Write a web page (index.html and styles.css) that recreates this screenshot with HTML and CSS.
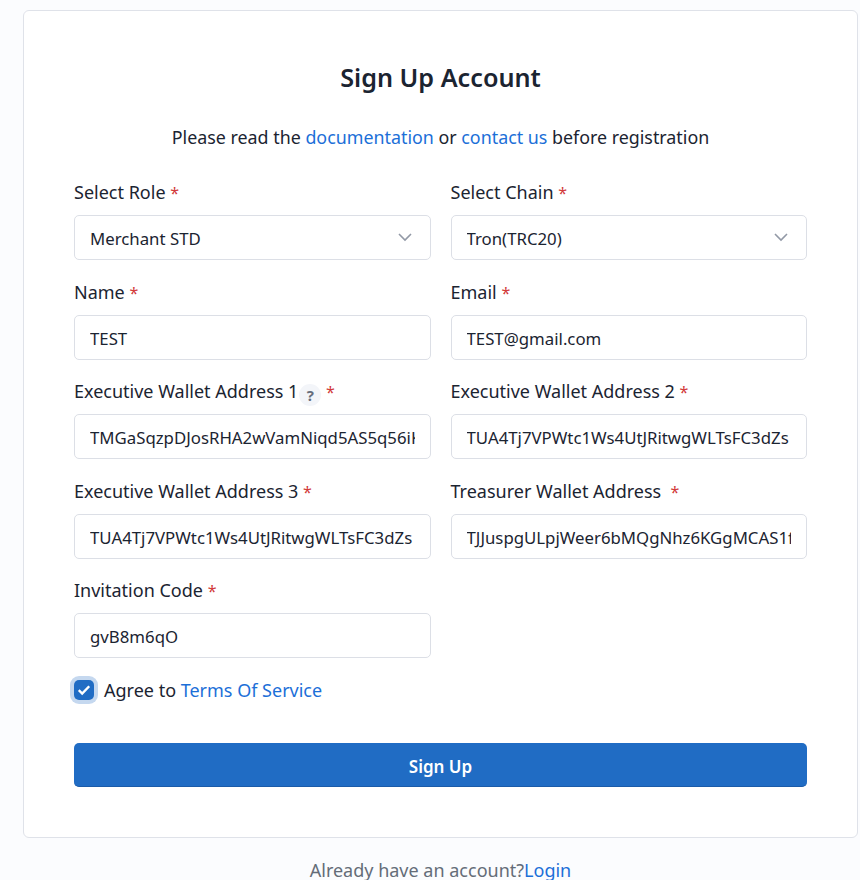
FILE: index.html
```html
<!DOCTYPE html>
<html lang="en">
<head>
    <meta charset="UTF-8">
    <meta name="viewport" content="width=device-width, initial-scale=1.0">
    <title>Sign Up Account</title>
    <link rel="stylesheet" href="styles.css">
</head>
<body>
    <div class="card">
        <h1 class="title">Sign Up Account</h1>
        <p class="intro">Please read the <a href="#">documentation</a> or <a href="#">contact us</a> before registration</p>
        <form class="form">
            <div class="grid">
                <div class="field">
                    <label>Select Role <span class="req">*</span></label>
                    <div class="select">
                        <input class="control" type="text" value="Merchant STD" readonly>
                        <svg class="chevron" width="16" height="16" viewBox="0 0 16 16"><path d="M2 5l6 6 6-6" fill="none" stroke="#9299a6" stroke-width="1.6"/></svg>
                    </div>
                </div>
                <div class="field">
                    <label>Select Chain <span class="req">*</span></label>
                    <div class="select">
                        <input class="control" type="text" value="Tron(TRC20)" readonly>
                        <svg class="chevron" width="16" height="16" viewBox="0 0 16 16"><path d="M2 5l6 6 6-6" fill="none" stroke="#9299a6" stroke-width="1.6"/></svg>
                    </div>
                </div>
                <div class="field">
                    <label>Name <span class="req">*</span></label>
                    <input class="control" type="text" value="TEST">
                </div>
                <div class="field">
                    <label>Email <span class="req">*</span></label>
                    <input class="control" type="text" value="TEST@gmail.com">
                </div>
                <div class="field">
                    <label>Executive Wallet Address 1<span class="help">?</span> <span class="req">*</span></label>
                    <input class="control" type="text" value="TMGaSqzpDJosRHA2wVamNiqd5AS5q56iKfLZ">
                </div>
                <div class="field">
                    <label>Executive Wallet Address 2 <span class="req">*</span></label>
                    <input class="control" type="text" value="TUA4Tj7VPWtc1Ws4UtJRitwgWLTsFC3dZs">
                </div>
                <div class="field">
                    <label>Executive Wallet Address 3 <span class="req">*</span></label>
                    <input class="control" type="text" value="TUA4Tj7VPWtc1Ws4UtJRitwgWLTsFC3dZs">
                </div>
                <div class="field">
                    <label>Treasurer Wallet Address &nbsp;<span class="req">*</span></label>
                    <input class="control" type="text" value="TJJuspgULpjWeer6bMQgNhz6KGgMCAS1fPqR">
                </div>
                <div class="field">
                    <label>Invitation Code <span class="req">*</span></label>
                    <input class="control" type="text" value="gvB8m6qO">
                </div>
            </div>
            <div class="agree">
                <span class="check">
                    <svg width="14" height="12" viewBox="0 0 14 12"><path d="M1.8 6.2l3.4 3.4 7-7.4" fill="none" stroke="#fff" stroke-width="2.4"/></svg>
                </span>
                <span>Agree to <a href="#">Terms Of Service</a></span>
            </div>
            <button class="submit" type="button">Sign Up</button>
        </form>
    </div>
    <p class="footer">Already have an account?<a href="#">Login</a></p>
</body>
</html>
```

FILE: styles.css
```css
* {
    box-sizing: border-box;
}
body {
    margin: 0;
    height: 880px;
    overflow: hidden;
    padding: 10px 2px 0 23px;
    background: #fbfcfe;
    color: #1b2431;
    font-family: "Noto Sans", sans-serif;
    font-size: 18px;
}
a {
    color: #1c6fd8;
    text-decoration: none;
}
.card {
    height: 828px;
    padding: 0 50px;
    background: #fff;
    border: 1px solid #dfe2e9;
    border-radius: 6px;
}
.title {
    margin: 46px 0 0;
    height: 40px;
    line-height: 40px;
    text-align: center;
    font-size: 25.2px;
    font-weight: 600;
}
.intro {
    margin: 25px 0 0;
    height: 30px;
    line-height: 30px;
    text-align: center;
    font-size: 17.85px;
}
.grid {
    display: grid;
    grid-template-columns: 1fr 1fr;
    column-gap: 20px;
    row-gap: 17.5px;
    margin-top: 26px;
}
.field label {
    display: block;
    height: 28px;
    line-height: 28px;
    margin-bottom: 9px;
}
.req {
    color: #d23a3a;
    font-size: 16px;
}
.help {
    display: inline-block;
    width: 22px;
    height: 22px;
    margin-left: 1px;
    border-radius: 50%;
    background: #f3f5f9;
    color: #666e7c;
    font-size: 15px;
    font-weight: 700;
    line-height: 22px;
    text-align: center;
    vertical-align: -3px;
}
.control {
    display: block;
    width: 100%;
    height: 45px;
    padding: 2px 15px 0;
    background: #fff;
    border: 1px solid #dcdfe6;
    border-radius: 5px;
    color: #1b2431;
    font-family: inherit;
    font-size: 16.8px;
    outline: none;
}
.select {
    position: relative;
}
.chevron {
    position: absolute;
    top: 14px;
    right: 18px;
}
.agree {
    display: flex;
    align-items: center;
    gap: 10px;
    margin-top: 17px;
    height: 30px;
}
.check {
    display: flex;
    align-items: center;
    justify-content: center;
    width: 20px;
    height: 20px;
    border-radius: 5px;
    background: #206cc4;
    box-shadow: 0 0 0 4px #c5d8ef;
}
.submit {
    display: block;
    width: 100%;
    height: 44px;
    padding-top: 4px;
    margin-top: 38px;
    background: #206cc4;
    border: none;
    border-bottom: 1px solid #1b5ba8;
    border-radius: 5px;
    color: #fff;
    font-family: inherit;
    font-size: 17px;
    font-weight: 600;
}
.footer {
    margin: 22px 0 0;
    text-align: center;
    line-height: 20px;
    color: #646c78;
}
```
